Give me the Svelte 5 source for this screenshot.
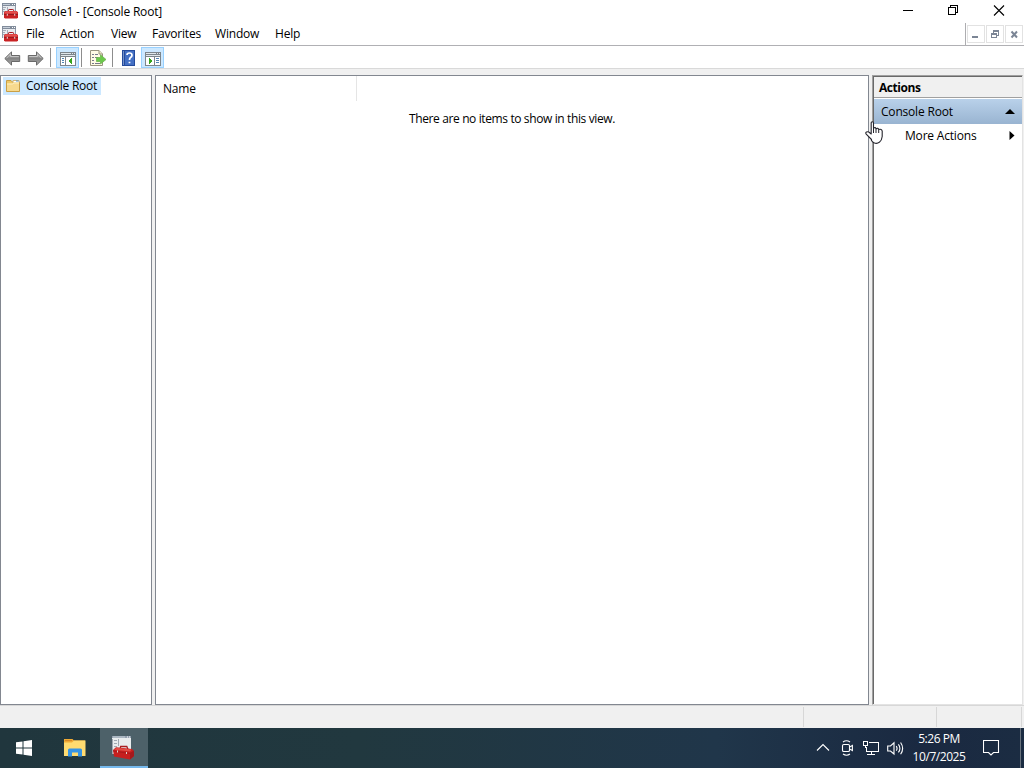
<script>
  const menus = [
    { label: 'File', width: 18 },
    { label: 'Action', width: 35 },
    { label: 'View', width: 25 },
    { label: 'Favorites', width: 47 },
    { label: 'Window', width: 44 },
    { label: 'Help', width: 25 }
  ];
</script>

{#snippet toolbox()}
  <path d="M0 0H14V12H0Z" fill="#e9ecf0" />
  <path d="M0 0H14V3H0Z" fill="#818c9b" />
  <path d="M1 1H8V2H1Z" fill="#c6ced9" />
  <path d="M10 1H11V2H10ZM12 1H13V2H12Z" fill="#fff" />
  <path d="M.5 3V12M13.5 3V8" fill="none" stroke="#8e98a6" />
  <path d="M1 4.5H4M1 6.5H3M1 8.5H3M5.5 4V8" fill="none" stroke="#a6adb8" />
  <path d="M6.5 9V7.2Q6.5 6.5 7.2 6.5H10.8Q11.6 6.5 11.6 7.2V9" fill="none" stroke="#a71920" />
  <path d="M2 9.2L3.3 8H14.7L16 9.2V14.5L15 15.5H3L2 14.5Z" fill="#c92224" />
  <path d="M2.5 9.6L3.6 8.3H14.5L15.5 9.6V10.5H2.5Z" fill="#e4504e" />
  <path d="M2 11.5H16" stroke="#8f171d" stroke-width=".8" />
  <path d="M4.8 10.8H5.8V12.8H4.8ZM12.2 10.8H13.2V12.8H12.2Z" fill="#e6d8d6" />
{/snippet}

{#snippet panelIcon(right)}
  <svg width="16" height="14" viewBox="0 0 16 14" shape-rendering="crispEdges">
    <path d="M0 0H16V14H0Z" fill="#7d858b" />
    <path d="M1 1H11V2H1ZM12 1H13V2H12ZM14 1H15V2H14ZM1 3H15V4H1Z" fill="#e1e8ec" />
    {#if right}
      <path d="M1 5H9V13H1ZM10 5H15V13H10Z" fill="#fff" />
      <path d="M11 6H14M11 8H14M11 10H14" transform="translate(0 .5)" stroke="#5285b4" />
      <path d="M4 6L8 9L4 12Z" fill="#35a51d" />
    {:else}
      <path d="M1 5H5V13H1ZM6 5H15V13H6Z" fill="#fff" />
      <path d="M2 6.5H4M2 8.5H4M2 10.5H4" stroke="#5285b4" />
      <path d="M12 6L8 9L12 12Z" fill="#35a51d" />
    {/if}
  </svg>
{/snippet}

{#snippet arrow(flip)}
  <svg class="arrow" class:flip width="17" height="15" viewBox="0 0 17 15">
    <defs><linearGradient id={flip ? 'forward' : 'back'} x2="0" y2="1"><stop stop-color="#c9c9c9" /><stop offset=".5" stop-color="#858585" /><stop offset="1" stop-color="#aaa" /></linearGradient></defs>
    <path d="M.8 7.5L7.5 .9V4.5H15.7V10.5H7.5V14.1Z" fill={flip ? 'url(#forward)' : 'url(#back)'} stroke="#696969" />
    <path d="M2.4 7.3L6.5 3.2V5.5H14.7" fill="none" stroke="#c5c5c5" />
  </svg>
{/snippet}

<div class="screen">
  <header class="title">
    <svg class="appicon" width="16" height="16" viewBox="0 0 16 16">{@render toolbox()}</svg>
    <span class="caption">Console1 - [Console Root]</span>
    <div class="window-buttons">
      <svg width="46" height="22"><path d="M17 10.5H27" stroke="#000" shape-rendering="crispEdges" /></svg>
      <svg width="46" height="22"><path d="M17.5 7.5H24.5V14.5H17.5ZM19.5 7V5.5H26.5V12.5H25" fill="none" stroke="#000" shape-rendering="crispEdges" /></svg>
      <svg width="46" height="22"><path d="M17 5.5L27 15.5M27 5.5L17 15.5" fill="none" stroke="#000" stroke-width="1.1" /></svg>
    </div>
  </header>

  <nav class="menu">
    <svg class="appicon" width="16" height="16" viewBox="0 0 16 16">{@render toolbox()}</svg>
    <div class="menu-items">
      {#each menus as item}<span style="width:{item.width}px">{item.label}</span>{/each}
    </div>
    <div class="child-buttons">
      <span><svg width="16" height="16"><path d="M4 10H10V12H4Z" fill="#7b8595" /></svg></span>
      <span><svg width="16" height="16" shape-rendering="crispEdges"><path d="M4.5 7.5H9.5V11.5H4.5ZM6.5 7V4.5H11.5V9.5H10M4 8H10M6 5H12" fill="none" stroke="#7b8595" /></svg></span>
      <span><svg width="16" height="16"><path d="M5.5 5.5L11 11.5M11 5.5L5.5 11.5" stroke="#7b8595" stroke-width="2" /></svg></span>
    </div>
  </nav>

  <div class="toolbar">
    <div class="history">{@render arrow(false)}{@render arrow(true)}</div>
    <i class="sep first"></i>
    <div class="toggle">{@render panelIcon(false)}</div>
    <i class="sep second"></i>
    <svg class="export" width="17" height="17" viewBox="0 0 17 17">
      <path d="M.5 .5H9L12.5 4V15.5H.5Z" fill="#fffbe5" stroke="#99947f" />
      <path d="M9 .5V4H12.5" fill="#eee7c4" stroke="#99947f" />
      <path d="M2 4.5H4M5 4.5H8M2 7.5H4M5 7.5H8M2 10.5H4M2 13.5H4M5 13.5H10" stroke="#77798a" />
      <path d="M6.5 7.5H10.5V4.8L16 9.5L10.5 14V11.5H6.5Z" fill="#6bc94b" stroke="#6eb44f" stroke-width=".8" />
    </svg>
    <i class="sep third"></i>
    <svg class="help" width="14" height="16" viewBox="0 0 14 16">
      <path d="M0 0H13V16H0Z" fill="#254b9c" /><path d="M3 1H12V15H3Z" fill="#4470c4" /><path d="M1.5 1V15" stroke="#7693c7" />
      <path d="M5 5Q5 3 7.4 3Q10 3 10 5.2Q10 6.5 8.5 7.5Q7.5 8.2 7.5 10M6.6 12.5H8.4" fill="none" stroke="#fff" stroke-width="1.7" />
    </svg>
    <div class="toggle last">{@render panelIcon(true)}</div>
  </div>

  <main>
    <section class="tree">
      <div class="tree-item">
        <svg width="15" height="14" viewBox="0 0 15 14">
          <path d="M.5 1.5H5L6.5 3H13.5V12.5H.5Z" fill="#efc967" stroke="#c99f45" />
          <path d="M7 1.5H13V4H7Z" fill="#fff" stroke="#d2b675" /><path d="M10 2H12.5" stroke="#5595cd" />
          <path d="M1 4.5H6L7.5 3.5H13V12H1Z" fill="#f7da8e" /><path d="M1 5H6.5L8 4H13" fill="none" stroke="#fff0bd" />
        </svg>
        <span>Console Root</span>
      </div>
    </section>
    <section class="list">
      <div class="column">Name</div>
      <p>There are no items to show in this view.</p>
    </section>
    <aside>
      <h2>Actions</h2>
      <div class="group"><span>Console Root</span><svg width="10" height="6"><path d="M0 5L5 0L10 5Z" /></svg></div>
      <div class="more"><span>More Actions</span><svg width="6" height="10"><path d="M.5 0L5.5 4.5L.5 9Z" /></svg></div>
    </aside>
  </main>

  <footer class="status"><i></i><i></i><i></i></footer>

  <footer class="taskbar">
    <div class="task start"><svg width="16" height="16" viewBox="0 0 16 16"><path d="M0 2.3L6.5 1.4V7.5H0ZM7.5 1.2L16 0V7.5H7.5ZM0 8.5H6.5V14.6L0 13.7ZM7.5 8.5H16V16L7.5 14.8Z" fill="#fff" /></svg></div>
    <div class="task"><svg class="explorer" width="22" height="18" viewBox="0 0 22 18">
      <path d="M0 0H8.5L10 1.5H21V17H0Z" fill="#efaa35" /><path d="M0 3.5H8L10 1.5H21.5V17H0Z" fill="#ffdb70" />
      <path d="M1 1H8V2H1Z" fill="#d88927" /><path d="M4 17.5V11Q4 9.5 5.5 9.5H16.5Q18 9.5 18 11V17.5H14V13.5H8V17.5Z" fill="#3694e4" />
    </svg></div>
    <div class="task active"><svg width="22" height="24" viewBox="0 0 22 24">
      <path d="M0 0H19V18H0Z" fill="#e9edee" /><path d="M0 0H19V2H0Z" fill="#929fae" /><path d="M1 .5H13V1.5H1Z" fill="#c4ced7" /><path d="M15 .5H16V1.5H15ZM17 .5H18V1.5H17Z" fill="#fff" />
      <path d="M.5 3V18M2 4.5H5M2 7.5H5M2 10.5H5M6.5 3V10" fill="none" stroke="#a0a9b2" />
      <path d="M8 13L8.7 10.5H14.8L16 13.5" fill="none" stroke="#a91f20" stroke-width="1.3" />
      <path d="M1 14L4 11.3L20 13L22 15V20L18 23.5L2 20.5Z" fill="#c71f1f" /><path d="M2 13.7L4.5 11.7L19.5 13.5L18 15.5Z" fill="#e24c44" />
      <path d="M1 15L18 17.5L22 15" fill="none" stroke="#a5181b" stroke-width=".8" /><path d="M5 14.5H6V16.5H5ZM14 16H15V18H14Z" fill="#ddd5cf" /><path d="M18 17V23.5L22 20V15Z" fill="#a5181c" />
    </svg></div>
    <div class="tray">
      <svg class="chevron" width="14" height="9"><path d="M1 7.5L7 1.5L13 7.5" /></svg>
      <svg class="camera" width="12" height="16"><rect x="1.5" y="4.5" width="7" height="7" rx="1.3" /><path d="M8.6 7L11.4 5.5V10.5L8.6 9M2 2Q5.5 -.5 9 2M2 14Q5.5 16.4 9 14" /></svg>
      <svg class="network" width="17" height="16" shape-rendering="crispEdges"><path d="M5.5 2.5H15.5V11.5H3.5V7M8.5 11.5V14.5M4 14.5H12M.5 1.5H4.5V5.5H.5ZM2.5 5.5V8" /></svg>
      <svg class="speaker" width="18" height="15"><path d="M.7 5H3.5L7 1.8V13L3.5 10H.7ZM9.2 5.2Q10.9 7.4 9.2 9.7M11.4 3.4Q14.4 7.4 11.4 11.4M13.6 1.5Q17.7 7.4 13.6 13.3" /></svg>
      <div class="clock"><span>5:26 PM</span><span>10/7/2025</span></div>
      <svg class="notice" width="17" height="17"><path d="M.5 .5H15.5V12.5H10.5L8 15L5.5 12.5H.5Z" /></svg>
      <i class="desktop"></i>
    </div>
  </footer>

  <svg class="pointer" width="19" height="24" viewBox="0 0 19 24"><path d="M6.5 18.5L1.2 13.2Q.2 11.7 1.5 11Q3.2 10.3 5 12L6.2 13V1.7Q6.2 .7 7.3 .7Q8.5 .7 8.5 2V7Q10.5 5.9 11 7.7Q13 6.6 13.7 8.5Q16.7 7.6 17.2 10V15.5Q16.8 19.5 14.4 21.2Q12 23.2 9 21.8Q7.5 21 6.5 19.5Z" fill="#fff" stroke="#24242c" stroke-width="1.1" stroke-linejoin="round" /><path d="M8.5 6V12M11 8V12M13.7 9V12" stroke="#24242c" /></svg>
</div>

<style>
  :global(body) { margin: 0; overflow: hidden; }
  * { box-sizing: border-box; }
  .screen { position: relative; width: 1024px; height: 768px; display: flex; flex-direction: column; background: #f0f0f0; color: #000; font: 12px/16px "Open Sans", "Noto Sans", sans-serif; letter-spacing: -.19px; white-space: nowrap; cursor: default; }
  svg { display: block; flex: none; }
  span { flex: none; }
  .title { height: 23px; background: #fff; display: flex; padding-left: 2px; }
  .appicon { margin-top: 3px; }
  .caption { margin: 4px 0 0 5px; }
  .window-buttons { display: flex; margin-left: auto; padding-right: 2px; }
  .window-buttons svg { position: relative; left: 1px; }
  .window-buttons svg:first-child { margin-right: -1px; }
  .menu { height: 23px; background: #fff; border-bottom: 1px solid #b0b0b4; display: flex; padding-left: 2px; }
  .menu-items { display: flex; gap: 16px; padding: 3px 0 0 8px; }
  .child-buttons { display: flex; gap: 1px; margin-left: auto; border-left: 1px solid #adadb0; padding: 2px 1px 0 1px; }
  .child-buttons span { width: 18px; height: 18px; border: 1px solid #e2e2e2; }
  .toolbar { height: 23px; background: #fff; border-bottom: 1px solid #d9d9d9; display: flex; }
  .history { display: flex; gap: 6px; padding: 5px 1px 0 4px; }
  .flip { transform: scaleX(-1); }
  .sep { width: 1px; height: 19px; margin-top: 2px; background: #8d8d8d; }
  .sep.first { margin-left: 5px; }
  .sep.second { margin-left: 2px; }
  .sep.third { margin-left: 5px; }
  .toggle { width: 23px; height: 21px; border: 1px solid #99d1ff; background: #cce8ff; display: flex; margin: 1px 0 0 5px; padding: 4px 0 0 3px; }
  .export { margin: 4px 0 0 8px; }
  .help { margin: 4px 0 0 9px; }
  .toggle.last { margin-left: 5px; }
  main { height: 636px; padding-top: 6px; display: flex; }
  .tree { width: 152px; height: 630px; background: #fff; border: 1px solid #828790; padding: 1px 0 0 2px; }
  .tree-item { width: 98px; height: 18px; background: #cce8ff; display: flex; padding: 2px 0 0 3px; }
  .tree-item span { margin: -1px 0 0 5px; letter-spacing: -.25px; }
  .list { width: 714px; height: 630px; margin-left: 3px; border: 1px solid #828790; background: #fff; }
  .column { width: 201px; height: 25px; padding: 5px 0 0 7px; border-right: 1px solid #e5e5e5; }
  .list p { margin: 10px 0 0; text-align: center; letter-spacing: -.38px; }
  aside { width: 151px; height: 630px; margin-left: 3px; padding: 1px 0 0 1px; background: #fff; border: 1px solid; border-color: #a0a0a0 #e3e3e3 #e3e3e3 #a0a0a0; box-shadow: inset 1px 1px #696969; }
  h2 { height: 21px; margin: 0; padding: 3px 0 0 5px; font: bold 12px/16px "Open Sans", sans-serif; letter-spacing: -.45px; background: #f0f0f0; border-bottom: 1px solid #a0a0a0; }
  .group { height: 25px; margin-top: 1px; background: linear-gradient(#b9d1ea, #99b4d1); display: flex; padding: 5px 7px 0; justify-content: space-between; }
  .group svg { margin-top: 5px; }
  .more { display: flex; justify-content: space-between; padding: 4px 7px 0 31px; }
  .more svg { margin-top: 3px; }
  .status { height: 23px; border-top: 1px solid #d7d7d7; display: flex; padding: 1px 2px 0 803px; }
  .status i { width: 1px; height: 20px; background: #d7d7d7; }
  .status i:nth-child(2) { margin: 0 84px 0 132px; }
  .taskbar { height: 40px; display: flex; background: linear-gradient(90deg, #20363d 0%, #21383f 35%, #20364a 70%, #1a2941 90%, #1b2c42 100%); color: #fff; }
  .task { width: 48px; height: 40px; display: flex; align-items: center; justify-content: center; }
  .task:nth-child(2) { width: 52px; }
  .explorer { margin-left: 2px; }
  .active { background: #4d6169; border-bottom: 2px solid #76b9ed; }
  .active svg { margin: 2px 0 0 -2px; }
  .tray { display: flex; margin-left: auto; align-items: flex-start; }
  .tray svg { fill: none; stroke: #fff; stroke-width: 1.1; }
  .chevron { margin-top: 15px; }
  .camera { margin: 12px 0 0 11px; }
  .network { margin: 12px 0 0 10px; }
  .speaker { margin: 13px 0 0 7px; }
  .clock { width: 60px; display: flex; flex-direction: column; align-items: center; gap: 2px; margin: 3px 0 0 4px; letter-spacing: -.45px; }
  .notice { margin: 12px 0 0 14px; }
  .desktop { width: 1px; height: 40px; margin: 0 3px 0 20px; background: #69737e; }
  .pointer { position: absolute; left: 865px; top: 121px; }
</style>
